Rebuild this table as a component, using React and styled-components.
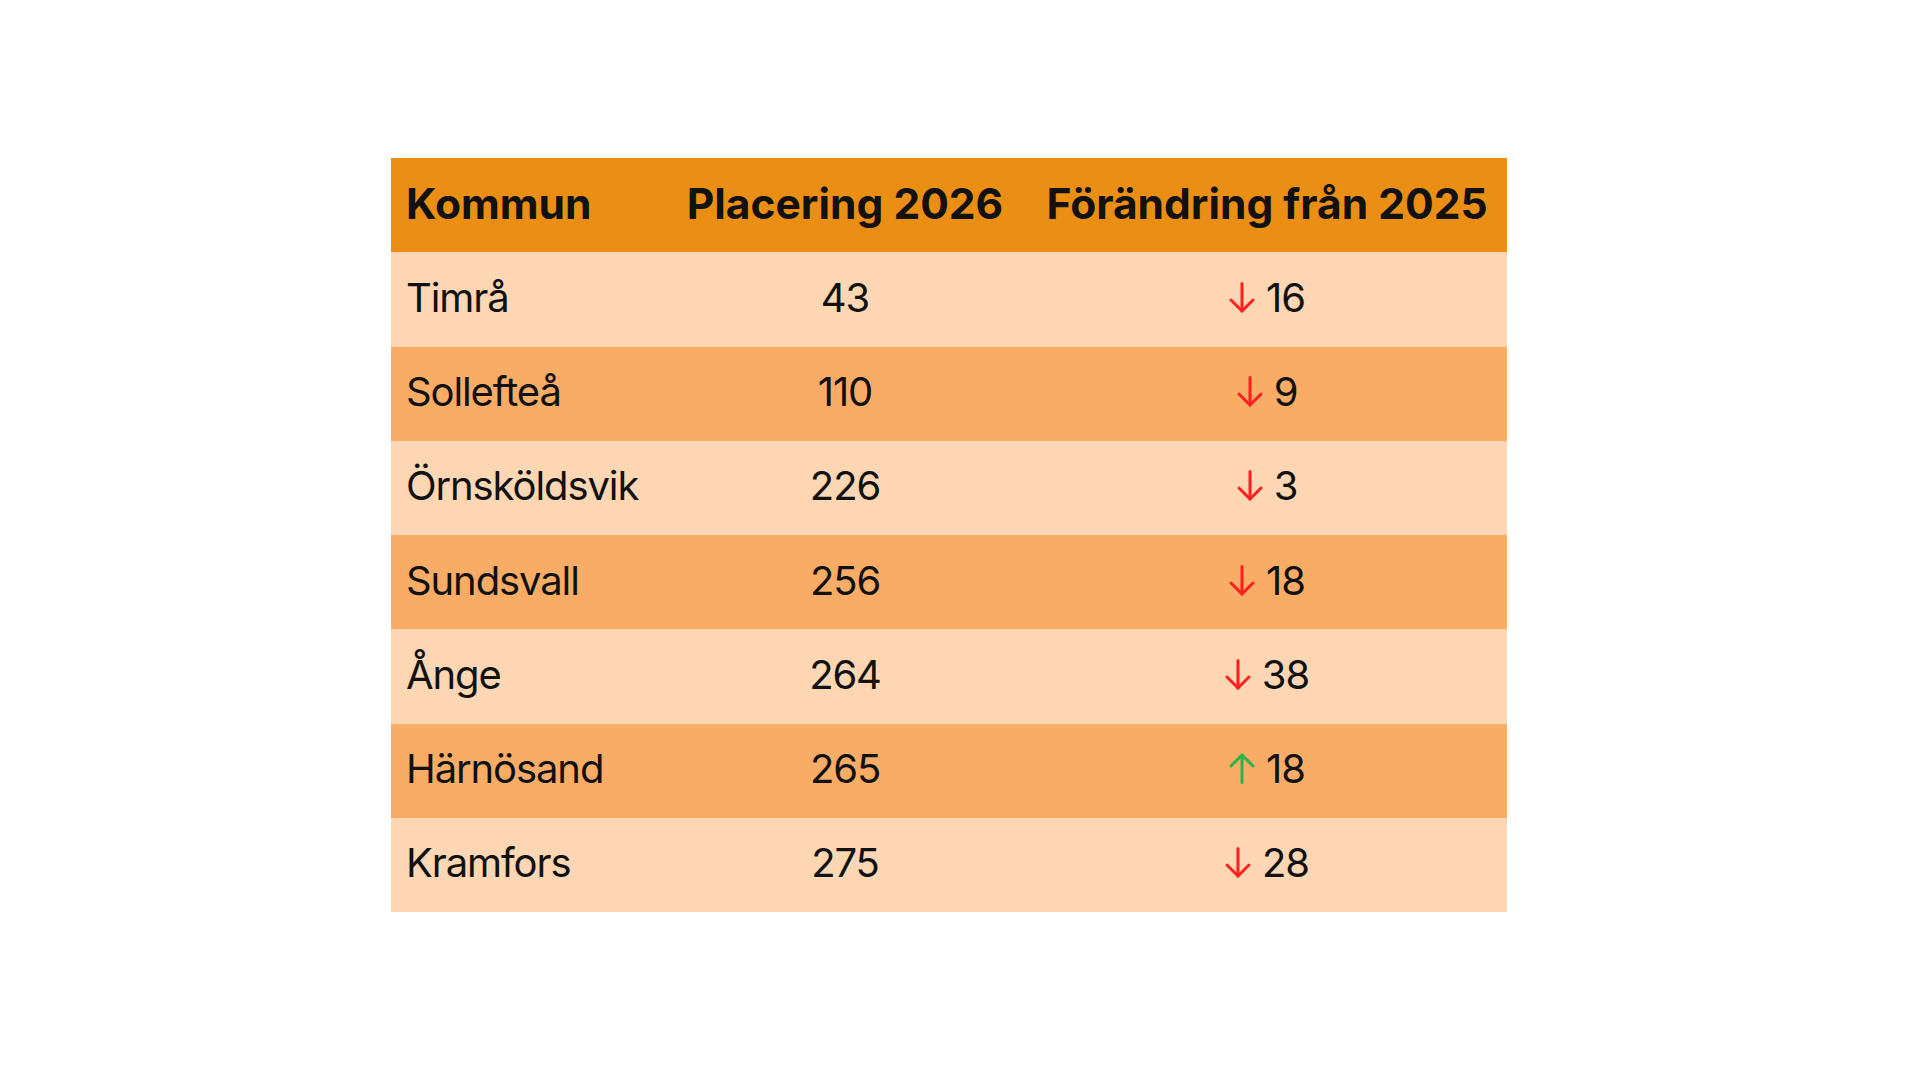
import React from "react";
import styled, { createGlobalStyle } from "styled-components";

const Global = createGlobalStyle`
  html, body { margin: 0; padding: 0; background: #ffffff; }
  body { font-family: Inter, "Noto Sans", sans-serif; }
`;

const Page = styled.div`
  width: 1918px;
  height: 1079px;
  box-sizing: border-box;
  padding: 158px 0 0 391px;
  background: #ffffff;
`;

const Table = styled.div`
  display: grid;
  grid-template-columns: 272px 364px 480px;
  width: 1116px;
`;

const Row = styled.div`
  display: contents;
`;

const Cell = styled.div`
  height: 94.25px;
  box-sizing: border-box;
  display: flex;
  align-items: center;
  justify-content: ${(p) => (p.$align === "left" ? "flex-start" : "center")};
  padding: 0 ${(p) => (p.$align === "left" ? "15px" : "0")} 4px;
  background: ${(p) => p.$bg};
  color: #111111;
  font-size: ${(p) => (p.$head ? "42.5px" : "40px")};
  font-weight: ${(p) => (p.$head ? 700 : 400)};
  letter-spacing: ${(p) => (p.$head ? "0" : "-1.1px")};
  white-space: nowrap;
`;

const Change = styled.span`
  display: inline-flex;
  align-items: center;
  gap: 11px;
`;

const Arrow = ({ up }) => (
  <svg width="26" height="31" viewBox="0 0 26 31" fill="none">
    {up ? (
      <g stroke="#2DB34A" strokeWidth="3" strokeLinecap="round" strokeLinejoin="round">
        <path d="M13 29.5V2" />
        <path d="M2 13L13 2L24 13" />
      </g>
    ) : (
      <g stroke="#FF1F1F" strokeWidth="3" strokeLinecap="round" strokeLinejoin="round">
        <path d="M13 1.5V29" />
        <path d="M2 18L13 29L24 18" />
      </g>
    )}
  </svg>
);

const rows = [
  ["Timrå", "43", false, "16"],
  ["Sollefteå", "110", false, "9"],
  ["Örnsköldsvik", "226", false, "3"],
  ["Sundsvall", "256", false, "18"],
  ["Ånge", "264", false, "38"],
  ["Härnösand", "265", true, "18"],
  ["Kramfors", "275", false, "28"],
];

export default function App() {
  const head = "#EA8E14";
  return (
    <>
      <Global />
      <Page>
        <Table>
          <Row>
            <Cell $head $align="left" $bg={head}>Kommun</Cell>
            <Cell $head $bg={head}>Placering 2026</Cell>
            <Cell $head $bg={head}>Förändring från 2025</Cell>
          </Row>
          {rows.map(([name, place, up, diff], i) => {
            const bg = i % 2 === 0 ? "#FDD7B3" : "#F8AC66";
            return (
              <Row key={name}>
                <Cell $align="left" $bg={bg}>{name}</Cell>
                <Cell $bg={bg}>{place}</Cell>
                <Cell $bg={bg}>
                  <Change>
                    <Arrow up={up} />
                    {diff}
                  </Change>
                </Cell>
              </Row>
            );
          })}
        </Table>
      </Page>
    </>
  );
}
